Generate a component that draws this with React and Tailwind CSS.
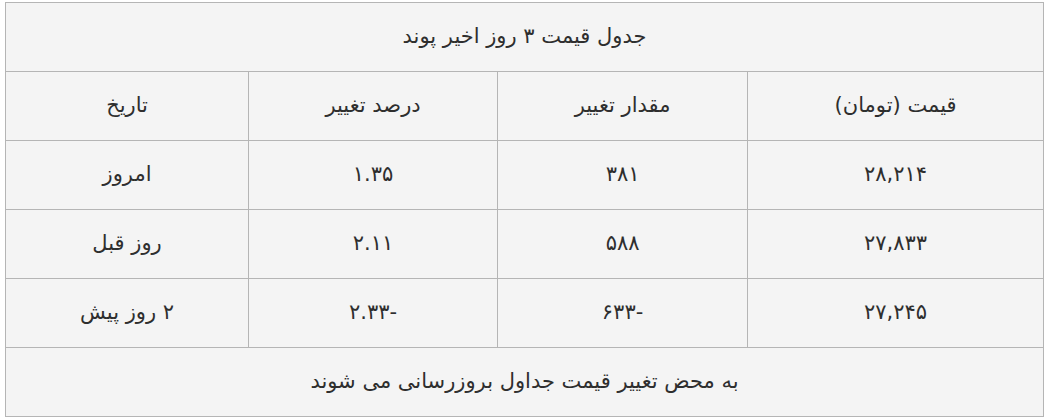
import React from 'react';

const rows = [
  { price: '۲۸,۲۱۴', change: '۳۸۱', percent: '۱.۳۵', date: 'امروز' },
  { price: '۲۷,۸۳۳', change: '۵۸۸', percent: '۲.۱۱', date: 'روز قبل' },
  { price: '۲۷,۲۴۵', change: '-۶۳۳', percent: '-۲.۳۳', date: '۲ روز پیش' },
];

const cell = 'border border-[#b5b5b5] h-[69px] text-center align-middle p-0';

export default function App() {
  return (
    <div className="pt-[2px] pl-[5px] bg-white min-h-[418px]">
      <table
        dir="rtl"
        className="w-[1038px] table-fixed border-collapse bg-[#f4f4f4] text-[#2e2e2e] text-[21px] font-['DejaVu_Sans',sans-serif]"
      >
        <colgroup>
          <col className="w-[296px]" />
          <col className="w-[250px]" />
          <col className="w-[249px]" />
          <col className="w-[243px]" />
        </colgroup>
        <tbody>
          <tr>
            <td colSpan={4} className={cell}>جدول قیمت ۳ روز اخیر پوند</td>
          </tr>
          <tr>
            <td className={cell}>قیمت (تومان)</td>
            <td className={cell}>مقدار تغییر</td>
            <td className={cell}>درصد تغییر</td>
            <td className={cell}>تاریخ</td>
          </tr>
          {rows.map((r, i) => (
            <tr key={i}>
              <td className={cell}>{r.price}</td>
              <td className={cell}>{r.change}</td>
              <td className={cell}>{r.percent}</td>
              <td className={cell}>{r.date}</td>
            </tr>
          ))}
          <tr>
            <td colSpan={4} className={cell}>به محض تغییر قیمت جداول بروزرسانی می شوند</td>
          </tr>
        </tbody>
      </table>
    </div>
  );
}
